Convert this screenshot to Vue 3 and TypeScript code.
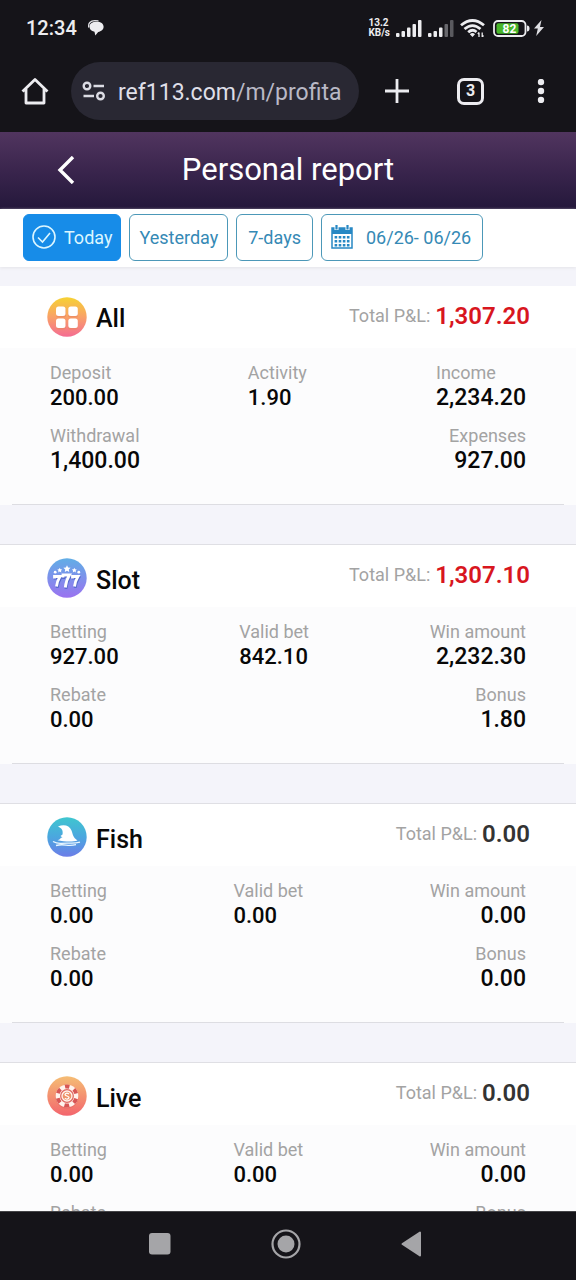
<script setup lang="ts">
import { ref } from 'vue'

interface Metric {
  label: string
  value: string
  large?: boolean
}

interface Section {
  id: string
  title: string
  total: string
  positive: boolean
  rows: Metric[][]
}

const active = ref('today')

const sections: Section[] = [
  {
    id: 'all',
    title: 'All',
    total: '1,307.20',
    positive: true,
    rows: [
      [{ label: 'Deposit', value: '200.00' }, { label: 'Activity', value: '1.90' }, { label: 'Income', value: '2,234.20' }],
      [{ label: 'Withdrawal', value: '1,400.00', large: true }, { label: 'Expenses', value: '927.00' }],
    ],
  },
  {
    id: 'slot',
    title: 'Slot',
    total: '1,307.10',
    positive: true,
    rows: [
      [{ label: 'Betting', value: '927.00' }, { label: 'Valid bet', value: '842.10' }, { label: 'Win amount', value: '2,232.30' }],
      [{ label: 'Rebate', value: '0.00' }, { label: 'Bonus', value: '1.80' }],
    ],
  },
  {
    id: 'fish',
    title: 'Fish',
    total: '0.00',
    positive: false,
    rows: [
      [{ label: 'Betting', value: '0.00' }, { label: 'Valid bet', value: '0.00' }, { label: 'Win amount', value: '0.00' }],
      [{ label: 'Rebate', value: '0.00' }, { label: 'Bonus', value: '0.00' }],
    ],
  },
  {
    id: 'live',
    title: 'Live',
    total: '0.00',
    positive: false,
    rows: [
      [{ label: 'Betting', value: '0.00' }, { label: 'Valid bet', value: '0.00' }, { label: 'Win amount', value: '0.00' }],
      [{ label: 'Rebate', value: '0.00' }, { label: 'Bonus', value: '0.00' }],
    ],
  },
]
</script>

<template>
  <div class="screen">
    <div class="status">
      <span class="clock">12:34</span>
      <svg class="chat" width="16" height="16" viewBox="0 0 16 16">
        <path d="M.8 7.500C-.2 3.500 2.500.6 7 .7l3.500.1" fill="none" stroke="#dedee2" stroke-width="1.300" />
        <path d="M8.500 1.800C12.600 1.700 15.600 3.600 15.600 6.800 15.600 9.500 13.200 11.500 10.200 12L7.300 15.500 6.500 11.800C3.300 11.300 1.500 9.300 1.500 6.600 1.500 3.600 4.500 1.900 8.500 1.800Z" fill="#ededf0" />
      </svg>
      <div class="speed"><span>13.2</span><span>KB/s</span></div>
      <svg class="signal" width="26" height="17" viewBox="0 0 26 17" fill="#ededf0">
        <rect x="0" y="13" width="3.500" height="4" rx="1" /><rect x="5.500" y="11" width="3.500" height="6" rx="1" /><rect x="11" y="7.500" width="3.500" height="9.500" rx="1" /><rect x="16.500" y="4" width="3.500" height="13" rx="1" /><rect x="22" y="0" width="3.500" height="17" rx="1" />
      </svg>
      <svg class="signal" width="26" height="17" viewBox="0 0 26 17" fill="#ededf0">
        <rect x="0" y="13" width="3.500" height="4" rx="1" /><rect x="5.500" y="11" width="3.500" height="6" rx="1" /><rect x="11" y="7.500" width="3.500" height="9.500" rx="1" /><rect x="16.500" y="4" width="3.500" height="13" rx="1" fill="#68686d" /><rect x="22" y="0" width="3.500" height="17" rx="1" fill="#5a5a5f" />
      </svg>
      <svg class="wifi" width="25" height="18" viewBox="0 0 25 18" fill="none" stroke="#ededf0" stroke-width="2.800">
        <path d="M1 6.300Q12.500-3.300 24 6.300M4.500 10Q12.500 3.200 20.500 10M8.200 13.300Q12.500 9.500 16.500 13" />
        <path d="M9.800 15.200Q12.500 12.800 15 15.200L12.500 18Z" fill="#ededf0" stroke="none" />
        <path d="M19 13.500V18M17.800 15l1.200-1.500M22.200 13.500V18l1.300-1.500" stroke-width="1.300" />
      </svg>
      <svg class="battery" width="37" height="17" viewBox="0 0 37 17">
        <rect x="1" y="1" width="31.500" height="15" rx="4" fill="none" stroke="#ededf0" stroke-width="1.800" />
        <rect x="3.500" y="3.300" width="22" height="10.400" rx="2" fill="#48b629" />
        <path d="M34 5.500q2.500 0 2.500 3t-2.500 3Z" fill="#ededf0" />
        <text x="16.500" y="12.500" text-anchor="middle" class="battery-text">82</text>
      </svg>
      <svg class="bolt" width="10" height="16" viewBox="0 0 10 16"><path d="M7.500 0 0 8.500h3.800L2.200 16 10 7H6Z" fill="#dedee2" /></svg>
    </div>

    <div class="toolbar">
      <button class="plain" aria-label="Home">
        <svg width="28" height="28" viewBox="0 0 28 28" fill="none" stroke="#ececf0" stroke-width="2.800" stroke-linejoin="round"><path d="M1.500 14.500 14 2.500 26.500 14.500M5 12V26H23V12" /></svg>
      </button>
      <div class="address">
        <svg width="24" height="20" viewBox="0 0 24 20" fill="none" stroke="#dcdce4" stroke-width="2.400"><circle cx="5" cy="5" r="3.300" /><path d="M11.500 5H22M1.500 15H12" /><circle cx="18.500" cy="15" r="3.300" /></svg>
        <span class="url">ref113.com<span class="path">/m/profita</span></span>
      </div>
      <button class="plain add" aria-label="New tab">
        <svg width="24" height="24" viewBox="0 0 24 24" stroke="#ececf0" stroke-width="2.800"><path d="M12 0V24M0 12H24" /></svg>
      </button>
      <button class="tabs" aria-label="Open tabs">3</button>
      <button class="plain more" aria-label="Menu">
        <svg width="8" height="24" viewBox="0 0 8 24" fill="#ececf0"><circle cx="4" cy="3" r="3.200" /><circle cx="4" cy="12" r="3.200" /><circle cx="4" cy="21" r="3.200" /></svg>
      </button>
    </div>

    <header class="header">
      <button class="plain back" aria-label="Back">
        <svg width="18" height="28" viewBox="0 0 18 28" fill="none" stroke="#fff" stroke-width="3.400"><path d="M16 1 3 14 16 27" /></svg>
      </button>
      <h1>Personal report</h1>
    </header>

    <div class="filters">
      <button class="chip today" :class="{ active: active === 'today' }" @click="active = 'today'">
        <svg width="24" height="24" viewBox="0 0 24 24" fill="none" stroke="currentColor" stroke-width="1.600"><circle cx="12" cy="12" r="11" /><path d="M6 12.500 10.500 17 18 8" /></svg>
        Today
      </button>
      <button class="chip" :class="{ active: active === 'yesterday' }" @click="active = 'yesterday'">Yesterday</button>
      <button class="chip week" :class="{ active: active === 'week' }" @click="active = 'week'">7-days</button>
      <button class="chip date">
        <svg width="22" height="24" viewBox="0 0 22 24">
          <path d="M1 3h20v20H1Z" fill="#fff" stroke="#2788c4" stroke-width="1.500" />
          <path d="M1 3h20v6H1Z" fill="#2788c4" />
          <path d="M5.500 1v4M16.500 1v4" stroke="#fff" stroke-width="4" />
          <path d="M5.500 0v4.500M16.500 0v4.500" stroke="#2788c4" stroke-width="2.200" />
          <path d="M3.600 12.200h15.500M3.600 16.200h15.500M3.600 20.200h15.500" stroke="#2788c4" stroke-width="2.400" stroke-dasharray="2.600 1.500" />
        </svg>
        06/26- 06/26
      </button>
    </div>

    <main class="content">
      <section v-for="s in sections" :key="s.id" class="card">
        <div class="head">
          <svg class="badge" width="40" height="40" viewBox="0 0 40 40">
            <defs>
              <linearGradient id="g-all" x1="0" y1="0" x2="0" y2="1"><stop offset="0" stop-color="#f6d233" /><stop offset=".5" stop-color="#f9a168" /><stop offset="1" stop-color="#f46c92" /></linearGradient>
              <linearGradient id="g-slot" x1="0" y1="0" x2="0" y2="1"><stop offset="0" stop-color="#61aee6" /><stop offset="1" stop-color="#9a73f0" /></linearGradient>
              <linearGradient id="g-fish" x1="0" y1="0" x2="0" y2="1"><stop offset="0" stop-color="#3fc6cf" /><stop offset=".5" stop-color="#4ba7df" /><stop offset="1" stop-color="#6c7de8" /></linearGradient>
              <linearGradient id="g-live" x1="0" y1="0" x2="0" y2="1"><stop offset="0" stop-color="#f5bd74" /><stop offset="1" stop-color="#f3656d" /></linearGradient>
            </defs>
            <circle cx="20" cy="20" r="19.700" :fill="`url(#g-${s.id})`" />
            <g v-if="s.id === 'all'">
              <g fill="#e98563" opacity=".6"><rect x="9" y="11" width="10" height="9.500" rx="2.500" /><rect x="21" y="11" width="10" height="9.500" rx="2.500" /><rect x="9" y="23" width="10" height="9.500" rx="2.500" /><rect x="21" y="23" width="10" height="9.500" rx="2.500" /></g>
              <g fill="#fff"><rect x="9" y="9.500" width="9.500" height="9.500" rx="2.500" /><rect x="21.300" y="9.500" width="9.500" height="9.500" rx="2.500" /><rect x="9" y="21.500" width="9.500" height="9.500" rx="2.500" /><rect x="21.300" y="21.500" width="9.500" height="9.500" rx="2.500" /></g>
            </g>
            <g v-else-if="s.id === 'slot'">
              <g fill="none" stroke="#5668cb" stroke-width="2.800" transform="translate(.6 1.400)"><path d="M7.500 20v-1.500h5.500q-2.800 4.500-3.500 10M16 19.500v-2.500h6.500q-3.300 5-4.200 12.500M25.500 20v-1.500h5.500q-2.800 4.500-3.500 10" /></g>
              <g fill="none" stroke="#fff" stroke-width="2.800"><path d="M7.500 20.500v-2h5.500q-2.800 4.500-3.500 10M16 19.500v-2.500h6.500q-3.300 5-4.200 12.500M25.500 20.500v-2h5.500q-2.800 4.500-3.500 10" /></g>
              <g fill="#fff"><path d="m20 7.200 1.100 2.200 2.500.3-1.800 1.700.4 2.500-2.200-1.200-2.200 1.200.4-2.500-1.800-1.700 2.500-.3Z" /><path d="m12.700 9.800.8 1.500 1.700.2-1.200 1.200.3 1.700-1.600-.8-1.500.8.300-1.700-1.200-1.200 1.700-.2ZM27.300 9.800l.8 1.500 1.700.2-1.200 1.200.3 1.700-1.600-.8-1.500.8.300-1.700-1.200-1.200 1.700-.2Z" /><circle cx="8.200" cy="14.200" r="1.400" /><circle cx="31.800" cy="14.200" r="1.400" /></g>
            </g>
            <g v-else-if="s.id === 'fish'">
              <path d="M11 9.500C17 7 22.500 8.500 24.500 13.500 25.800 17 26 20.500 30.500 23.500 25 25.300 17 24.500 10.500 23.300 12.500 22.800 13.500 22 13.800 20.800L15.500 20.500 13.500 19 15.500 17.500C16.300 14 15 11 11 9.500Z" fill="#fff" />
              <path d="M6 24.500q4 2.200 8.500 1.800t9-.2 9.500-1M9 28.500q5-1.300 10-.4t10-.4" fill="none" stroke="#e9f7ff" stroke-width="1.300" />
            </g>
            <g v-else>
              <circle cx="20" cy="21" r="11.500" fill="#db6260" opacity=".4" />
              <circle cx="20" cy="20" r="11.300" fill="#fff3ed" />
              <circle cx="20" cy="20" r="9.500" fill="none" stroke="#d75655" stroke-width="3.800" stroke-dasharray="4.800 5.148" stroke-dashoffset="2.400" transform="rotate(-90 20 20)" />
              <circle cx="20" cy="20" r="6.300" fill="#fff3ed" stroke="#e06a62" stroke-width="1.300" />
              <circle cx="20" cy="20" r="4.300" fill="#ee9368" />
              <path d="M22 18q-2-1.500-3.500-.3t1.500 2.300 1.500 2.500-3.700-.4" fill="none" stroke="#fff" stroke-width="1.200" />
            </g>
          </svg>
          <h2>{{ s.title }}</h2>
          <p class="total">Total P&amp;L: <strong :class="{ positive: s.positive }">{{ s.total }}</strong></p>
        </div>
        <div class="body">
          <div v-for="(row, i) in s.rows" :key="i" class="row">
            <dl v-for="m in row" :key="m.label" class="metric" :class="{ large: m.large, start: m.label === 'Income' }">
              <dt>{{ m.label }}</dt>
              <dd>{{ m.value }}</dd>
            </dl>
          </div>
        </div>
      </section>
    </main>

    <nav class="system">
      <button class="plain" aria-label="Recent apps"><svg width="22" height="22" viewBox="0 0 22 22"><rect x="0" y="0" width="21.500" height="21.500" rx="3" fill="#a5a5a8" /></svg></button>
      <button class="plain" aria-label="Home screen"><svg width="30" height="30" viewBox="0 0 30 30"><circle cx="15" cy="15" r="13.500" fill="none" stroke="#a5a5a8" stroke-width="2.200" /><circle cx="15" cy="15" r="8.500" fill="#a5a5a8" /></svg></button>
      <button class="plain" aria-label="Go back"><svg width="22" height="26" viewBox="0 0 22 26"><path d="M19 1.500V24.500L1.500 13Z" fill="#a5a5a8" stroke="#a5a5a8" stroke-width="2" stroke-linejoin="round" /></svg></button>
    </nav>
  </div>
</template>

<style>
body {
  margin: 0;
}
</style>

<style scoped>
.screen {
  display: flex;
  flex-direction: column;
  height: 100vh;
  overflow: hidden;
  background: #f4f4fa;
  font-family: Roboto, "Liberation Sans", sans-serif;
}
button {
  font-family: inherit;
  margin: 0;
  cursor: pointer;
}
svg {
  display: block;
  flex: none;
}
.plain {
  padding: 0;
  border: 0;
  background: none;
}
.status {
  display: flex;
  align-items: center;
  height: 56px;
  padding: 0 32px 0 26px;
  background: #151419;
  color: #ededf0;
}
.clock {
  font-size: 20px;
  font-weight: 500;
}
.chat {
  margin-left: 11px;
}
.speed {
  display: flex;
  flex-direction: column;
  margin-left: auto;
  font-size: 10px;
  line-height: 10px;
  font-weight: 700;
}
.signal {
  margin-left: 6px;
}
.wifi {
  margin-left: 6px;
}
.battery {
  margin-left: 8px;
}
.battery-text {
  fill: #fff;
  font-size: 12px;
  font-weight: 700;
}
.bolt {
  margin-left: 4px;
}
.toolbar {
  display: flex;
  align-items: center;
  height: 76px;
  padding: 0 31px 6px 21px;
  box-sizing: border-box;
  background: #151419;
}
.address {
  display: flex;
  flex: 1;
  align-items: center;
  gap: 12px;
  height: 58px;
  min-width: 0;
  margin-left: 22px;
  padding-left: 11px;
  box-sizing: border-box;
  border-radius: 29px;
  background: #292833;
  overflow: hidden;
}
.url {
  padding-top: 2px;
  color: #dfdfe8;
  font-size: 23px;
  white-space: nowrap;
}
.path {
  color: #b9b9c6;
}
.add {
  margin-left: 26px;
}
.tabs {
  width: 27px;
  height: 27px;
  margin-left: 48px;
  padding: 0;
  border: 3px solid #ececf0;
  border-radius: 7px;
  background: none;
  color: #ececf0;
  font-size: 16px;
  line-height: 20px;
  font-weight: 700;
}
.more {
  margin-left: 53px;
}
.header {
  display: grid;
  grid-template-columns: 1fr auto 1fr;
  align-items: center;
  height: 77px;
  padding-bottom: 2px;
  box-sizing: border-box;
  background: linear-gradient(#51355f, #3a254d 50%, #24183b);
  color: #fff;
}
.back {
  margin-left: 57px;
  justify-self: start;
}
h1 {
  margin: 0;
  font-size: 31px;
  line-height: 36px;
  font-weight: 400;
}
.filters {
  display: flex;
  align-items: center;
  gap: 8px;
  height: 58px;
  padding: 0 23px 2px;
  box-sizing: border-box;
  background: #fff;
  box-shadow: 0 1px 3px #e4e4e8;
}
.chip {
  display: flex;
  align-items: center;
  justify-content: center;
  height: 47px;
  padding: 0 9px;
  border: 1px solid #4c98b8;
  border-radius: 6px;
  background: #fff;
  color: #3589b5;
  font-size: 18px;
  white-space: nowrap;
}
.chip.active {
  border-color: #178ce8;
  background: #178ce8;
  color: #dcf6ff;
}
.today {
  gap: 8px;
  padding: 0 8px;
}
.week {
  padding: 0 11px;
}
.date {
  gap: 13px;
  padding: 0 11px 0 9px;
}
.content {
  flex: 1;
  min-height: 0;
  padding-top: 19px;
  overflow: hidden;
}
.card {
  margin-bottom: 40px;
  background: linear-gradient(#dddde2, #dddde2) 50% 100% / calc(100% - 24px) 1px no-repeat, #fcfcfd;
}
.card + .card {
  box-shadow: 0 -1px #dfdfe4;
}
.head {
  display: flex;
  align-items: center;
  height: 62px;
  padding: 0 46px 0 47px;
  background: #fff;
}
h2 {
  margin: 4px 0 0 9px;
  color: #080808;
  font-size: 25px;
  line-height: 30px;
  font-weight: 500;
}
.card + .card .badge {
  margin-top: 4px;
}
.card + .card h2 {
  margin-top: 10px;
}
.total {
  display: flex;
  align-items: center;
  gap: 5px;
  margin: 0 0 2px auto;
  color: #a3a3a3;
  font-size: 18px;
  line-height: 30px;
  white-space: nowrap;
}
.total strong {
  color: #333;
  font-size: 24px;
  font-weight: 600;
}
.total .positive {
  color: #d8161e;
}
.body {
  display: flex;
  flex-direction: column;
  gap: 13px;
  padding: 13px 50px 31px;
}
.row {
  display: flex;
  justify-content: space-between;
}
.metric {
  margin: 0;
}
.metric dt {
  color: #a3a3a3;
  font-size: 18px;
  line-height: 24px;
}
.metric dd {
  margin: 0;
  color: #080808;
  font-size: 22px;
  line-height: 26px;
  font-weight: 500;
}
.metric.large dd,
.metric:last-child dd {
  font-size: 23px;
}
.metric:last-child {
  text-align: right;
}
.metric.start {
  text-align: left;
}
.system {
  display: flex;
  align-items: center;
  justify-content: center;
  gap: 100px;
  height: 69px;
  box-sizing: border-box;
  padding: 0 4px 4px 0;
  border-top: 1px solid #444447;
  background: #151419;
}
</style>
